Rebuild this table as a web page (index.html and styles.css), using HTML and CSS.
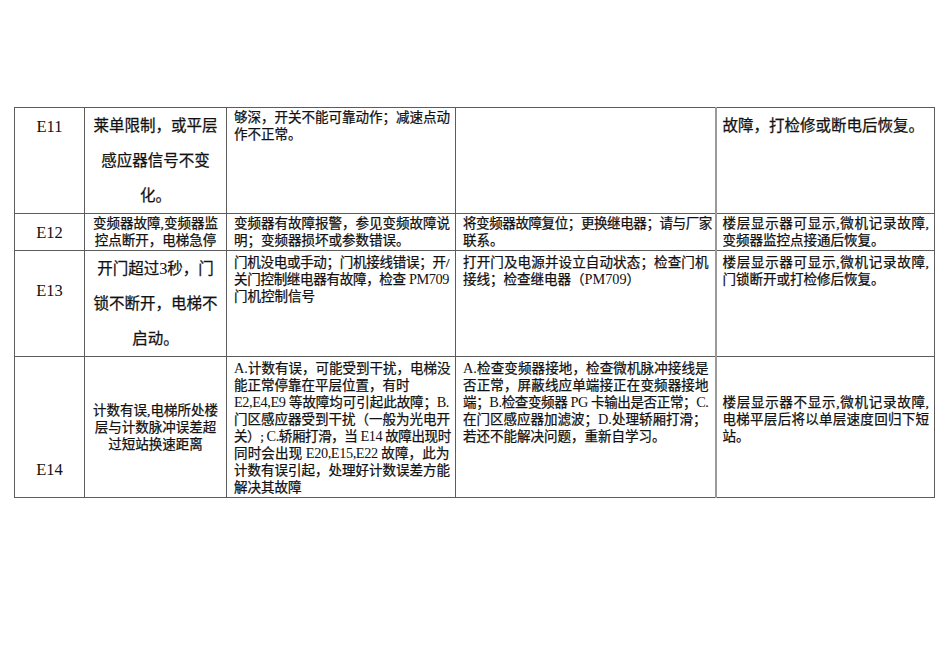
FILE: index.html
```
<!DOCTYPE html>
<html lang="zh-CN">
<head>
<meta charset="utf-8">
<title>电梯故障代码表</title>
<link rel="stylesheet" href="styles.css">
</head>
<body>
<div class="page">
<table class="grid">
<colgroup>
<col class="w1"><col class="w2"><col class="w3"><col class="w4"><col class="w5">
</colgroup>
<tbody>
<tr class="r1">
<td class="code">E11</td>
<td class="big center"><span class="l">莱单限制，或平层</span><span class="l">感应器信号不变</span><span class="l">化。</span></td>
<td><span class="j">够深，开关不能可靠动作；减速点动</span><span class="l">作不正常。</span></td>
<td></td>
<td class="c5 big"><span class="l">故障，打检修或断电后恢复。</span></td>
</tr>
<tr class="r2">
<td class="code mid">E12</td>
<td class="center"><span class="l">变频器故障,变频器监</span><span class="l">控点断开，电梯急停</span></td>
<td><span class="j">变频器有故障报警，参见变频故障说</span><span class="l">明；变频器损坏或参数错误。</span></td>
<td><span class="j t">将变频器故障复位；更换继电器；请与厂家</span><span class="l">联系。</span></td>
<td class="c5"><span class="j">楼层显示器可显示,微机记录故障,</span><span class="l">变频器监控点接通后恢复。</span></td>
</tr>
<tr class="r3">
<td class="code e13">E13</td>
<td class="big center"><span class="l">开门超过<span class="lat">3</span>秒，门</span><span class="l">锁不断开，电梯不</span><span class="l">启动。</span></td>
<td class="pt"><span class="j t">门机没电或手动；门机接线错误；开/</span><span class="j t">关门控制继电器有故障，检查 <span class="lat">PM709</span></span><span class="l">门机控制信号</span></td>
<td class="pt"><span class="j">打开门及电源并设立自动状态；检查门机</span><span class="l">接线；检查继电器（<span class="lat">PM709</span>）</span></td>
<td class="c5 pt"><span class="j">楼层显示器可显示,微机记录故障,</span><span class="l">门锁断开或打检修后恢复。</span></td>
</tr>
<tr class="r4">
<td class="code e14">E14</td>
<td class="center mid"><span class="l">计数有误,电梯所处楼</span><span class="l">层与计数脉冲误差超</span><span class="l">过短站换速距离</span></td>
<td class="pt"><span class="j"><span class="lat">A.</span>计数有误，可能受到干扰，电梯没</span><span class="l">能正常停靠在平层位置，有时</span><span class="j t"><span class="lat">E2,E4,E9</span> 等故障均可引起此故障；<span class="lat">B.</span></span><span class="j">门区感应器受到干扰（一般为光电开</span><span class="j t">关）; <span class="lat">C.</span>轿厢打滑，当 <span class="lat">E14</span> 故障出现时</span><span class="j t">同时会出现 <span class="lat">E20,E15,E22</span> 故障，此为</span><span class="j">计数有误引起，处理好计数误差方能</span><span class="l">解决其故障</span></td>
<td class="pt"><span class="j"><span class="lat">A.</span>检查变频器接地，检查微机脉冲接线是</span><span class="j">否正常，屏蔽线应单端接正在变频器接地</span><span class="j t">端；<span class="lat">B.</span>检查变频器 <span class="lat">PG</span> 卡输出是否正常；<span class="lat">C.</span></span><span class="l">在门区感应器加滤波；<span class="lat">D.</span>处理轿厢打滑；</span><span class="l">若还不能解决问题，重新自学习。</span></td>
<td class="c5 mid lift"><span class="j">楼层显示器不显示,微机记录故障,</span><span class="j">电梯平层后将以单层速度回归下短</span><span class="l">站。</span></td>
</tr>
</tbody>
</table>
</div>
</body>
</html>
```
FILE: styles.css
```
* { box-sizing: border-box; }
html, body { margin: 0; background: #fff; }
body {
  font-family: "Liberation Serif", "Noto Sans CJK SC", serif;
  color: #111;
}
.page { padding: 107px 0 0 14px; }
.grid {
  border-collapse: collapse;
  table-layout: fixed;
  width: 920px;
}
.w1 { width: 70px; }
.w2 { width: 142px; }
.w3 { width: 229px; }
.w4 { width: 260px; }
.w5 { width: 219px; }
.r1 { height: 106px; }
.r2 { height: 37px; }
.r3 { height: 105px; }
.r4 { height: 141px; }
.grid td {
  border: 1px solid #5c5c5c;
  padding: 1px 6px 0 7px;
  vertical-align: top;
  font-size: 13.5px;
  line-height: 17px;
  -webkit-text-stroke: 0.25px #111;
}
.grid td.c5 { border-left: 2px solid #9a9a9a; padding-left: 6px; padding-right: 5px; }
.grid td.code {
  text-align: center;
  font-size: 16.5px;
  line-height: 35px;
  padding: 1px 0 0;
  -webkit-text-stroke: 0;
}
.grid td.big { font-size: 15.5px; line-height: 35px; padding-top: 0; }
.grid td.center { text-align: center; padding-left: 2px; padding-right: 2px; }
.grid td.mid { vertical-align: middle; padding-top: 0; }
.grid td.pt { padding-top: 3px; }
.grid td.e13 { padding-top: 22px; }
.grid td.e14 { vertical-align: bottom; padding-bottom: 10px; }
.grid td.lift { padding-bottom: 15px; }
.l, .j { display: block; white-space: nowrap; }
.j { text-align: justify; text-align-last: justify; }
.t { letter-spacing: -0.4px; }
.lat { font-size: 1.06em; -webkit-text-stroke: 0; }
```
